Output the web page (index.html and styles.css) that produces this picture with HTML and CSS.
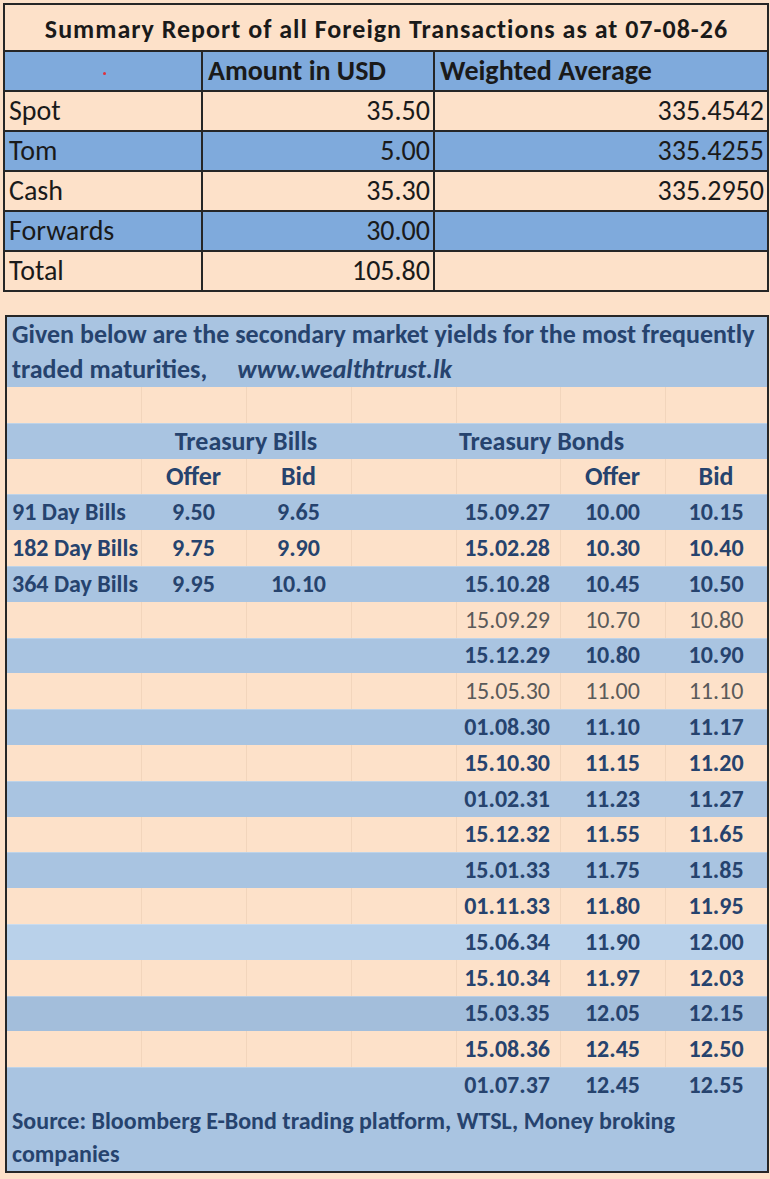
FILE: index.html
```html
<!DOCTYPE html>
<html lang="en">
<head>
<meta charset="utf-8">
<title>Summary Report of all Foreign Transactions</title>
<link rel="stylesheet" href="styles.css">
</head>
<body>
<div class="page">
  <table class="summary">
    <colgroup><col class="c1"><col class="c2"><col class="c3"></colgroup>
    <tr class="title"><td colspan="3">Summary Report of all Foreign Transactions as at 07-08-26</td></tr>
    <tr class="head"><td class="dotcell"><span class="dot"></span></td><td>Amount in USD</td><td>Weighted Average</td></tr>
    <tr><td>Spot</td><td class="num">35.50</td><td class="num">335.4542</td></tr>
    <tr class="blue"><td>Tom</td><td class="num">5.00</td><td class="num">335.4255</td></tr>
    <tr><td>Cash</td><td class="num">35.30</td><td class="num">335.2950</td></tr>
    <tr class="blue"><td>Forwards</td><td class="num">30.00</td><td></td></tr>
    <tr><td>Total</td><td class="num">105.80</td><td></td></tr>
  </table>

  <table class="yields">
    <colgroup><col class="y1"><col class="y2"><col class="y2"><col class="y2"><col class="y5"><col class="y2"><col class="y7"></colgroup>
    <tr class="b intro"><td colspan="7"><span class="line">Given below are the secondary market yields for the most frequently</span><br><span class="line">traded maturities,<span class="site">www.wealthtrust.lk</span></span></td></tr>
    <tr class="p"><td></td><td></td><td></td><td></td><td></td><td></td><td></td></tr>
    <tr class="b hdr"><td></td><td colspan="2" class="ctr">Treasury Bills</td><td></td><td colspan="3" class="bonds">Treasury Bonds</td></tr>
    <tr class="p hdr"><td></td><td class="ctr">Offer</td><td class="ctr">Bid</td><td></td><td></td><td class="ctr">Offer</td><td class="ctr">Bid</td></tr>
    <tr class="b"><td class="lbl">91 Day Bills</td><td class="ctr">9.50</td><td class="ctr">9.65</td><td></td><td class="date">15.09.27</td><td class="ctr">10.00</td><td class="ctr">10.15</td></tr>
    <tr class="p"><td class="lbl">182 Day Bills</td><td class="ctr">9.75</td><td class="ctr">9.90</td><td></td><td class="date">15.02.28</td><td class="ctr">10.30</td><td class="ctr">10.40</td></tr>
    <tr class="b"><td class="lbl">364 Day Bills</td><td class="ctr">9.95</td><td class="ctr">10.10</td><td></td><td class="date">15.10.28</td><td class="ctr">10.45</td><td class="ctr">10.50</td></tr>
    <tr class="p gray"><td></td><td></td><td></td><td></td><td class="date">15.09.29</td><td class="ctr">10.70</td><td class="ctr">10.80</td></tr>
    <tr class="b"><td></td><td></td><td></td><td></td><td class="date">15.12.29</td><td class="ctr">10.80</td><td class="ctr">10.90</td></tr>
    <tr class="p gray"><td></td><td></td><td></td><td></td><td class="date">15.05.30</td><td class="ctr">11.00</td><td class="ctr">11.10</td></tr>
    <tr class="b"><td></td><td></td><td></td><td></td><td class="date">01.08.30</td><td class="ctr">11.10</td><td class="ctr">11.17</td></tr>
    <tr class="p"><td></td><td></td><td></td><td></td><td class="date">15.10.30</td><td class="ctr">11.15</td><td class="ctr">11.20</td></tr>
    <tr class="b"><td></td><td></td><td></td><td></td><td class="date">01.02.31</td><td class="ctr">11.23</td><td class="ctr">11.27</td></tr>
    <tr class="p"><td></td><td></td><td></td><td></td><td class="date">15.12.32</td><td class="ctr">11.55</td><td class="ctr">11.65</td></tr>
    <tr class="b"><td></td><td></td><td></td><td></td><td class="date">15.01.33</td><td class="ctr">11.75</td><td class="ctr">11.85</td></tr>
    <tr class="p"><td></td><td></td><td></td><td></td><td class="date">01.11.33</td><td class="ctr">11.80</td><td class="ctr">11.95</td></tr>
    <tr class="b light"><td></td><td></td><td></td><td></td><td class="date">15.06.34</td><td class="ctr">11.90</td><td class="ctr">12.00</td></tr>
    <tr class="p"><td></td><td></td><td></td><td></td><td class="date">15.10.34</td><td class="ctr">11.97</td><td class="ctr">12.03</td></tr>
    <tr class="b dark"><td></td><td></td><td></td><td></td><td class="date">15.03.35</td><td class="ctr">12.05</td><td class="ctr">12.15</td></tr>
    <tr class="p"><td></td><td></td><td></td><td></td><td class="date">15.08.36</td><td class="ctr">12.45</td><td class="ctr">12.50</td></tr>
    <tr class="b"><td></td><td></td><td></td><td></td><td class="date">01.07.37</td><td class="ctr">12.45</td><td class="ctr">12.55</td></tr>
    <tr class="b source"><td colspan="7">Source: Bloomberg E-Bond trading platform, WTSL, Money broking<br>companies</td></tr>
  </table>
</div>
</body>
</html>
```

FILE: styles.css
```css
* { box-sizing: border-box; }
html, body { margin: 0; padding: 0; background: #fde1c9; }
body {
  font-family: Carlito, Calibri, Lato, sans-serif;
  width: 770px;
  height: 1179px;
  overflow: hidden;
}
.page {
  padding: 3px 3px 0 3px;
  display: flex;
  flex-direction: column;
  gap: 23px;
}

/* ---------- Summary table ---------- */
.summary {
  width: 764px;
  border-collapse: collapse;
  table-layout: fixed;
  border: 2px solid #262626;
}
.summary .c1 { width: 198px; }
.summary .c2 { width: 232px; }
.summary .c3 { width: 334px; }
.summary tr { height: 40px; }
.summary td {
  border: 2px solid #262626;
  padding: 0 3px 0 4px;
  font-size: 28px;
  color: #1a1a1a;
  white-space: nowrap;
  vertical-align: middle;
  line-height: 1;
}
.summary .title { height: 47px; }
.summary .title td {
  text-align: center;
  font-weight: 700;
  font-size: 26px;
  letter-spacing: 1px;
  padding-top: 2px;
}
.summary .head td { background: #7faadc; font-weight: 700; padding-left: 5px; }
.summary .blue td { background: #7faadc; }
.summary .num { text-align: right; }
.dotcell { text-align: center; }
.dot {
  display: inline-block;
  width: 3px;
  height: 3px;
  border-radius: 50%;
  background: #e0303c;
  vertical-align: middle;
}

/* ---------- Yields table ---------- */
.yields {
  width: 762px;
  margin-left: 2px;
  border-collapse: collapse;
  table-layout: fixed;
  border: 2px solid #262626;
}
.yields .y1 { width: 135px; }
.yields .y2 { width: 105px; }
.yields .y5 { width: 104px; }
.yields .y7 { width: 103px; }
.yields tr { height: 35.8px; }
.yields td {
  padding: 0;
  font-size: 24px;
  font-weight: 700;
  color: #26436e;
  white-space: nowrap;
  vertical-align: middle;
  line-height: 1;
}
.yields tr.hdr td { font-size: 26px; }
.yields tr.b td { background: #a9c4e1; box-shadow: inset 0 1px 0 rgba(255, 255, 255, 0.25); }
.yields tr.b.light td { background: #b9d1ea; }
.yields tr.b.dark td { background: #a3bedb; }
.yields tr.p td { background: #fde1c9; }
.yields tr.p td + td { box-shadow: inset 1px 0 0 rgba(150, 110, 80, 0.10); }
.yields tr.gray td { color: #5a5a5a; font-weight: 400; }
.yields tr.intro td, .yields tr.source td { box-shadow: none; }

.yields .intro td {
  height: 71px;
  padding: 0 5px;
  font-size: 26px;
  line-height: 35px;
}
.yields .intro .site { font-style: italic; margin-left: 30px; }
.yields .ctr { text-align: center; }
.yields .lbl { padding-left: 5px; overflow: visible; }
.yields .date { text-align: right; padding-right: 10px; }
.yields .bonds { padding-left: 3px; }
.yields .source td {
  height: 69px;
  padding: 0 5px 1px 5px;
  line-height: 33px;
  vertical-align: bottom;
}
```
